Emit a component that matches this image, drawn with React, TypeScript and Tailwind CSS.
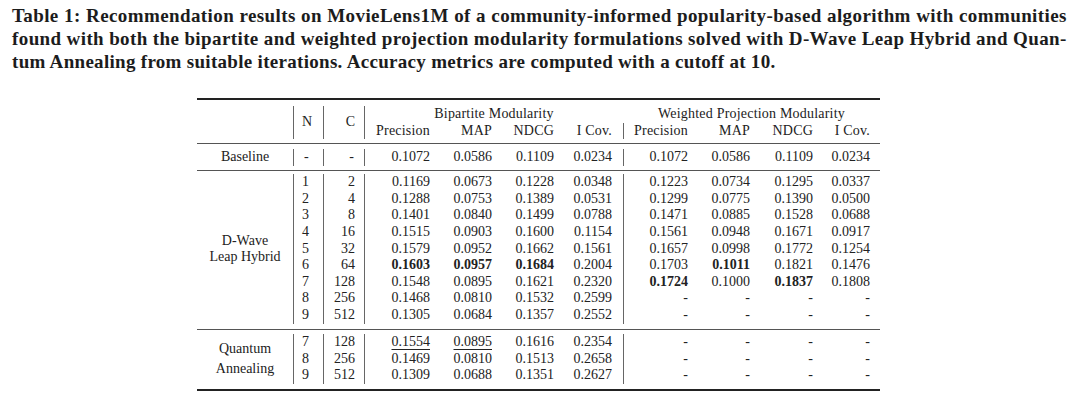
import React from "react";

// ── Data ──────────────────────────────────────────────────────────────────────

// "*" prefix = bold, "_" prefix = underlined
type Row = [number, number, ...string[]];

const DASH = ["-", "-", "-", "-"];

const DWAVE: Row[] = [
  [1, 2, "0.1169", "0.0673", "0.1228", "0.0348", "0.1223", "0.0734", "0.1295", "0.0337"],
  [2, 4, "0.1288", "0.0753", "0.1389", "0.0531", "0.1299", "0.0775", "0.1390", "0.0500"],
  [3, 8, "0.1401", "0.0840", "0.1499", "0.0788", "0.1471", "0.0885", "0.1528", "0.0688"],
  [4, 16, "0.1515", "0.0903", "0.1600", "0.1154", "0.1561", "0.0948", "0.1671", "0.0917"],
  [5, 32, "0.1579", "0.0952", "0.1662", "0.1561", "0.1657", "0.0998", "0.1772", "0.1254"],
  [6, 64, "*0.1603", "*0.0957", "*0.1684", "0.2004", "0.1703", "*0.1011", "0.1821", "0.1476"],
  [7, 128, "0.1548", "0.0895", "0.1621", "0.2320", "*0.1724", "0.1000", "*0.1837", "0.1808"],
  [8, 256, "0.1468", "0.0810", "0.1532", "0.2599", ...DASH],
  [9, 512, "0.1305", "0.0684", "0.1357", "0.2552", ...DASH],
];

const QA: Row[] = [
  [7, 128, "_0.1554", "_0.0895", "0.1616", "0.2354", ...DASH],
  [8, 256, "0.1469", "0.0810", "0.1513", "0.2658", ...DASH],
  [9, 512, "0.1309", "0.0688", "0.1351", "0.2627", ...DASH],
];

const METRICS = ["Precision", "MAP", "NDCG", "I Cov."];

// right padding per metric column (bipartite then weighted)
const PAD = [
  "pr-[6px] border-l border-[#666]",
  "pr-[6px]",
  "pr-[6px]",
  "pr-[11px]",
  "pr-[6px] border-l border-[#666]",
  "pr-[6px]",
  "pr-[6px]",
  "pr-[10px]",
];

const GRID =
  "grid grid-cols-[96px_30px_41px_72px_62px_62px_63px_71px_62px_63px_61px] leading-[16.6px]";

const CAPTION_LINES = [
  "Table 1: Recommendation results on MovieLens1M of a community-informed popularity-based algorithm with communities",
  "found with both the bipartite and weighted projection modularity formulations solved with D-Wave Leap Hybrid and Quan-",
];

// ── Helpers ───────────────────────────────────────────────────────────────────

/** A fully justified caption line: words spread edge to edge. */
function JustifiedLine({ text }: { text: string }) {
  return (
    <div className="flex justify-between whitespace-nowrap">
      {text.split(" ").map((w, i) => (
        <span key={i}>{w}</span>
      ))}
    </div>
  );
}

function Value({ v }: { v: string }) {
  if (v.startsWith("*")) return <span className="font-bold">{v.slice(1)}</span>;
  if (v.startsWith("_"))
    return <span className="underline decoration-1 underline-offset-[3px]">{v.slice(1)}</span>;
  return <>{v}</>;
}

function DataRows({ rows }: { rows: Row[] }) {
  return (
    <>
      {rows.map((r) => (
        <React.Fragment key={r[0]}>
          <div className="col-start-2 border-l border-[#666] pl-[8px]">{r[0]}</div>
          <div className="border-l border-[#666] pr-[9px] text-right">{r[1]}</div>
          {(r.slice(2) as string[]).map((v, i) => (
            <div key={i} className={`text-right ${PAD[i]}`}>
              <Value v={v} />
            </div>
          ))}
        </React.Fragment>
      ))}
    </>
  );
}

// ── Component ─────────────────────────────────────────────────────────────────

export default function App() {
  return (
    <div className="w-[1080px] h-[402px] bg-white overflow-hidden font-['Liberation_Serif',serif]">
      {/* Caption */}
      <div className="ml-[12px] w-[1055px] pt-[3.5px] text-[19px] tracking-[0.4px] leading-[23px] font-bold text-[#1c1c1c]">
        {CAPTION_LINES.map((l) => (
          <JustifiedLine key={l} text={l} />
        ))}
        <div className="whitespace-nowrap tracking-[0.3px]">
          tum Annealing from suitable iterations. Accuracy metrics are computed with a cutoff at 10.
        </div>
      </div>

      {/* Table */}
      <div className="pl-[197px] pt-[25.5px]">
        <div className="w-[683px] text-[14px] text-[#222]">
          <div className="h-[2px] bg-[#222]" />

          {/* Header */}
          <div className={`${GRID} pt-[6px] pb-[4px]`}>
            <div className="row-span-2" />
            <div className="row-span-2 border-l border-[#666] pl-[8px] flex items-center">N</div>
            <div className="row-span-2 border-l border-[#666] pr-[9px] flex items-center justify-end">C</div>
            <div className="col-span-4 border-l border-[#666] text-center tracking-[0.2px]">Bipartite Modularity</div>
            <div className="col-span-4 text-center tracking-[0.2px]">Weighted Projection Modularity</div>
            {[...METRICS, ...METRICS].map((m, i) => (
              <div key={i} className={`text-right tracking-[0.2px] ${PAD[i]} ${i === 0 ? "border-l border-[#666]" : ""}`}>
                {m}
              </div>
            ))}
          </div>

          <div className="h-[1px] bg-[#555]" />

          {/* Baseline */}
          <div className={`${GRID} pt-[5px] pb-[4.4px]`}>
            <div className="text-center">Baseline</div>
            <div className="border-l border-[#666] pl-[10px]">-</div>
            <div className="border-l border-[#666] pr-[10px] text-right">-</div>
            {["0.1072", "0.0586", "0.1109", "0.0234", "0.1072", "0.0586", "0.1109", "0.0234"].map((v, i) => (
              <div key={i} className={`text-right ${PAD[i]}`}>
                {v}
              </div>
            ))}
          </div>

          <div className="h-[1px] bg-[#555]" />

          {/* D-Wave Leap Hybrid */}
          <div className={`${GRID} pt-[3px] pb-[5px]`}>
            <div className="row-span-9 row-start-1 col-start-1 flex flex-col items-center justify-center leading-[15.5px]">
              <span>D-Wave</span>
              <span>Leap Hybrid</span>
            </div>
            <DataRows rows={DWAVE} />
          </div>

          <div className="h-[1px] bg-[#555]" />

          {/* Quantum Annealing */}
          <div className={`${GRID} pt-[4.6px] pb-[4.7px]`}>
            <div className="row-span-3 row-start-1 col-start-1 flex flex-col items-center justify-center leading-[20px]">
              <span>Quantum</span>
              <span>Annealing</span>
            </div>
            <DataRows rows={QA} />
          </div>

          <div className="h-[2px] bg-[#222]" />
        </div>
      </div>
    </div>
  );
}
